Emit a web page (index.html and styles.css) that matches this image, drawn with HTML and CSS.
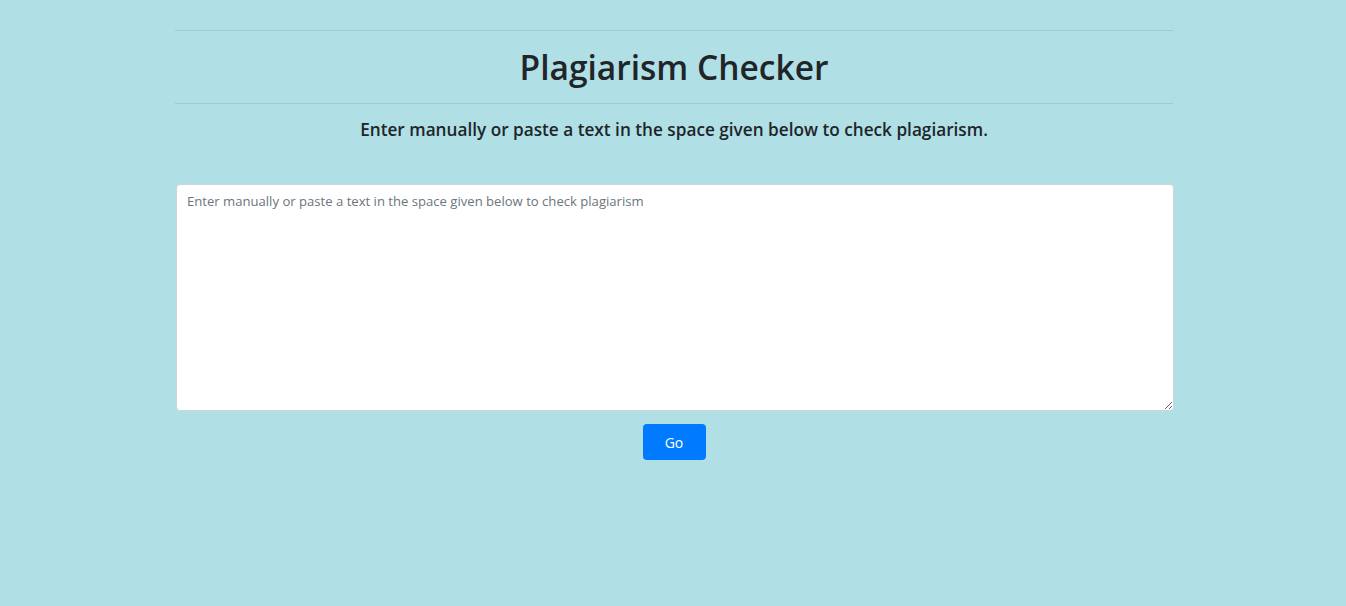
FILE: index.html
```html
<!DOCTYPE html>
<html lang="en">
<head>
<meta charset="utf-8">
<title>Plagiarism Checker</title>
<link rel="stylesheet" href="styles.css">
</head>
<body>
<main class="page">
  <hr class="rule">
  <h1 class="title">Plagiarism Checker</h1>
  <hr class="rule">
  <h5 class="lead">Enter manually or paste a text in the space given below to check plagiarism.</h5>
  <form class="checker">
    <textarea class="input" placeholder="Enter manually or paste a text in the space given below to check plagiarism"></textarea>
    <button type="button" class="btn">Go</button>
  </form>
</main>
</body>
</html>
```
FILE: styles.css
```css
html, body {
  margin: 0;
  padding: 0;
  background: #b0e0e6;
  height: 100%;
}
body {
  font-family: "Open Sans", "Noto Sans", sans-serif;
  color: #212529;
}
.page {
  width: 998px;
  margin: 0 0 0 175px;
  padding-top: 30px;
  display: flex;
  flex-direction: column;
}
.rule {
  margin: 0;
  border: 0;
  border-top: 1px solid #9ccbd1;
  height: 0;
}
.title {
  margin: 0;
  height: 72px;
  display: flex;
  align-items: center;
  justify-content: center;
  font-size: 33.5px;
  font-weight: 600;
  letter-spacing: 0;
}
.lead {
  margin: 0;
  padding-top: 14px;
  text-align: center;
  font-size: 17.2px;
  font-weight: 600;
  line-height: 24px;
}
.checker {
  margin-top: 42px;
  display: flex;
  flex-direction: column;
  align-items: center;
  gap: 13px;
}
.input {
  box-sizing: border-box;
  width: 998px;
  height: 227px;
  margin: 0 0 0 1px;
  align-self: stretch;
  border: 1px solid #ced4da;
  border-radius: 4px;
  background: #fff;
  padding: 7px 10px;
  font-family: inherit;
  font-size: 13.1px;
  line-height: 18px;
  color: #495057;
  resize: vertical;
}
.input::placeholder {
  color: #6c757d;
}
.btn {
  width: 63px;
  height: 36px;
  border: 0;
  border-radius: 4px;
  background: #007bff;
  color: #fff;
  font-family: inherit;
  font-size: 14px;
  margin-left: 0;
}
```
